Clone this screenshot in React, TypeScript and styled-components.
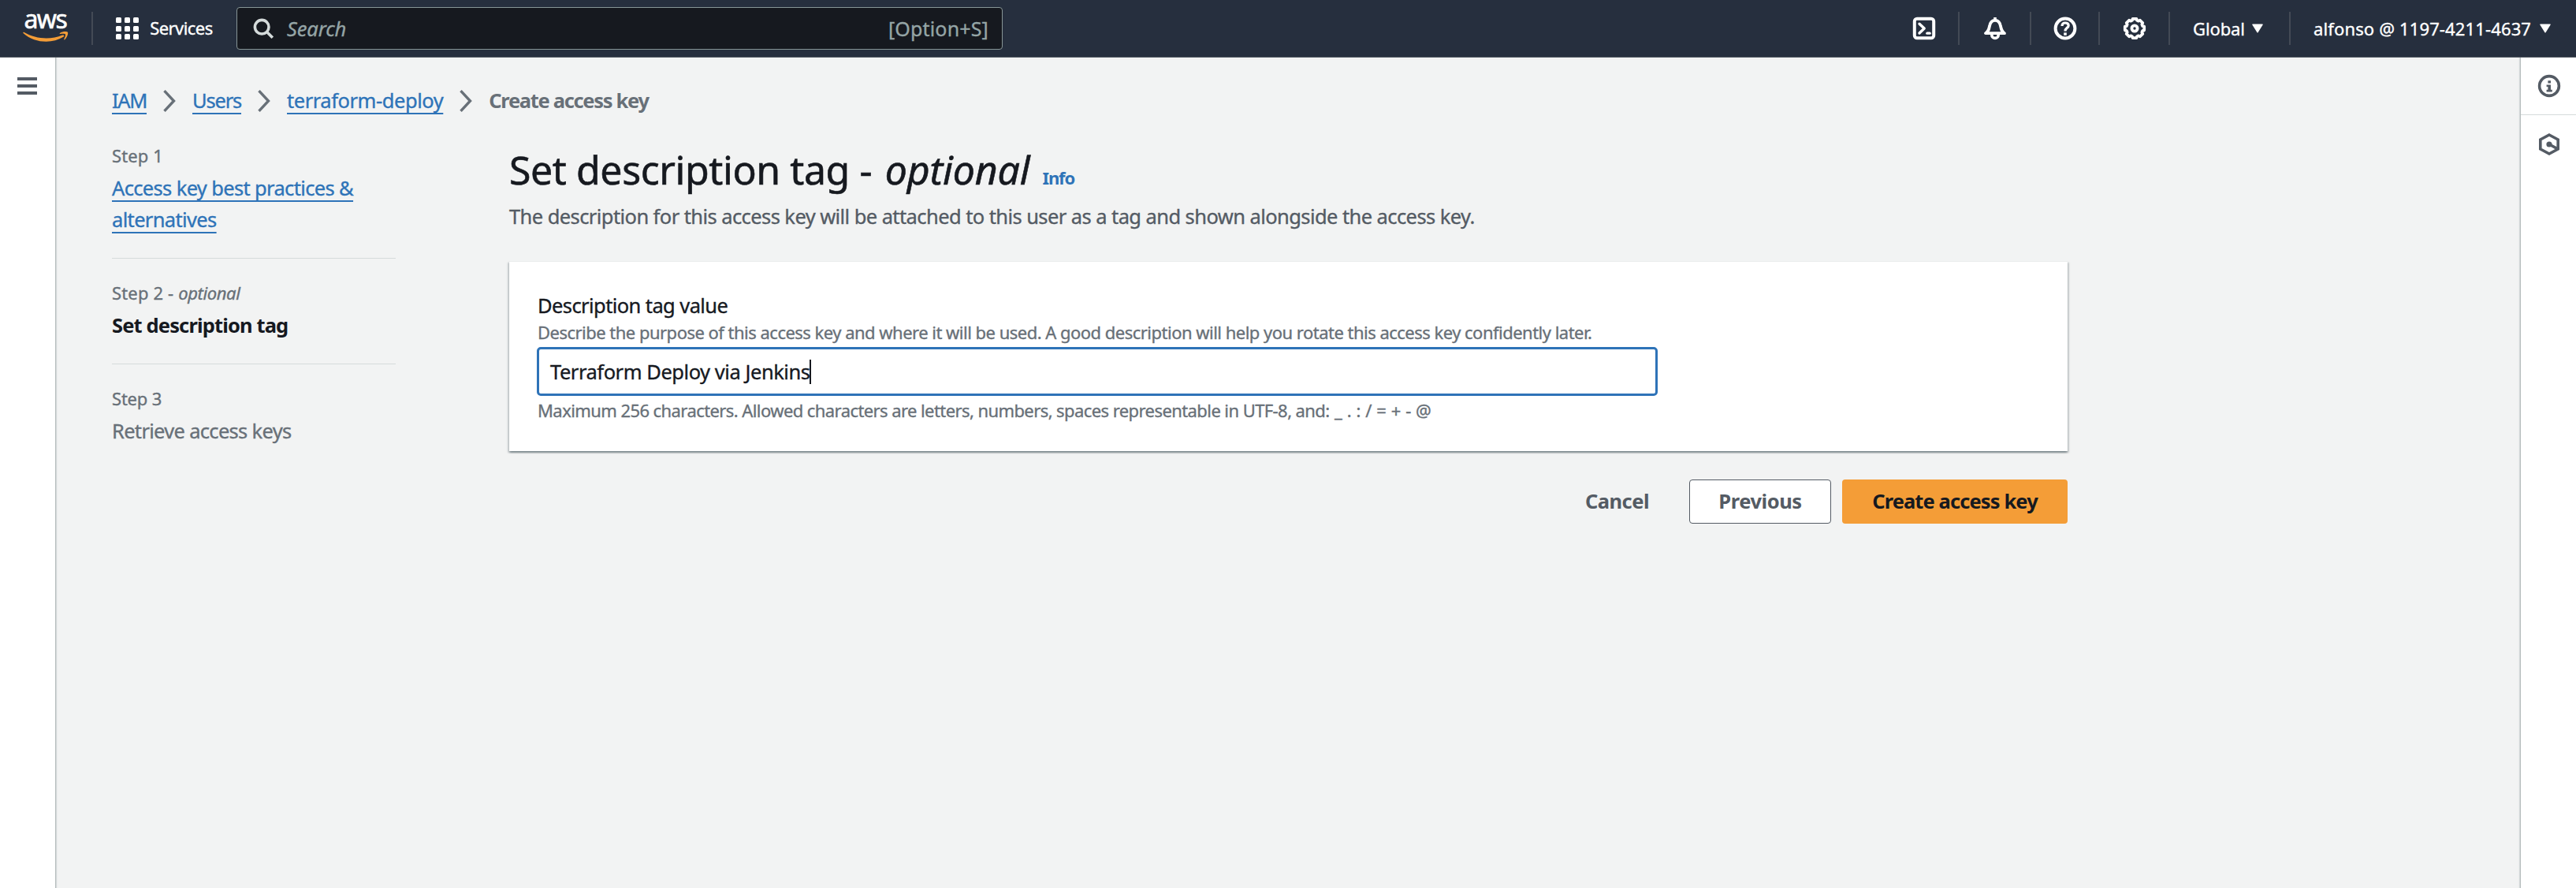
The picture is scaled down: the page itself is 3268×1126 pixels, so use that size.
import React from 'react';
import styled, { createGlobalStyle } from 'styled-components';

const color = {
  nav: '#262f3e',
  navLine: '#434a55',
  ink: '#16191f',
  text: '#545b64',
  muted: '#687078',
  link: '#2e73b8',
  page: '#f2f3f3',
  line: '#d5dbdb',
  orange: '#f49d37',
};

const GlobalStyle = createGlobalStyle`
  * { box-sizing: border-box; }
  body {
    margin: 0;
    background: ${color.page};
    font-family: "Noto Sans", "Open Sans", sans-serif;
    font-size: 25.5px;
    line-height: 40px;
    color: ${color.ink};
    -webkit-text-stroke: 0.35px;
    overflow: hidden;
  }
`;

const Page = styled.div`
  display: flex;
  flex-direction: column;
  height: 1126px;
`;

/* ---------- top navigation ---------- */

const TopNav = styled.header`
  display: flex;
  align-items: center;
  height: 73px;
  flex: none;
  background: ${color.nav};
  border-bottom: 1px solid #545b64;
  color: #fff;
  font-size: 22px;
`;

const Logo = styled.a`
  display: flex;
  flex-direction: column;
  width: 58px;
  height: 48px;
  margin-left: 29px;
`;

const LogoText = styled.span`
  height: 24px;
  padding-left: 1.5px;
  font-size: 32px;
  line-height: 24px;
  letter-spacing: -1.6px;
  -webkit-text-stroke: 0.6px;
`;

const Smile = styled.svg`
  width: 58px;
  height: 16px;
  margin-top: 3px;
`;

const Divider = styled.i<{ $gap?: string }>`
  width: 2px;
  height: 42px;
  margin: ${(p) => p.$gap ?? '0'};
  background: ${color.navLine};
`;

const ServicesButton = styled.div`
  display: flex;
  align-items: center;
  gap: 14px;
  width: 153px;
  letter-spacing: -0.56px;
  line-height: 30px;
`;

const ServicesLabel = styled.span`
  padding-bottom: 2px;
`;

const AppGrid = styled.span`
  display: grid;
  grid-template-columns: repeat(3, 7.4px);
  grid-auto-rows: 7px;
  gap: 3.5px;
`;

const AppDot = styled.i`
  background: #fff;
  border-radius: 1.5px;
`;

const SearchBox = styled.div`
  display: flex;
  align-items: center;
  width: 972px;
  height: 54px;
  padding: 0 17px 0 20px;
  background: ${color.ink};
  border: 1px solid #879596;
  border-radius: 4px;
  color: #95a5a6;
  font-size: 25.5px;
`;

const SearchIcon = styled.svg`
  width: 27px;
  height: 27px;
  fill: none;
  stroke: ${color.line};
  stroke-width: 3.6;
`;

const SearchHint = styled.em`
  flex: 1;
  margin-left: 16px;
  letter-spacing: -0.15px;
`;

const Shortcut = styled.span`
  font-size: 25px;
  letter-spacing: 0.16px;
`;

const NavRight = styled.div`
  display: flex;
  align-items: center;
  margin-left: auto;
`;

const IconCell = styled.span<{ $w: number }>`
  display: flex;
  align-items: center;
  justify-content: center;
  width: ${(p) => p.$w}px;
  height: 72px;
`;

const NavMenu = styled.span<{ $w: number; $track: number; $gap: number }>`
  display: flex;
  align-items: center;
  gap: ${(p) => p.$gap}px;
  width: ${(p) => p.$w}px;
  padding-left: 29px;
  letter-spacing: ${(p) => p.$track}px;
  white-space: nowrap;
`;

const Icon = styled.svg`
  width: 32px;
  height: 32px;
  fill: none;
  stroke: currentColor;
  stroke-width: 2;
  flex: none;
`;

const CaretDown = styled.svg`
  width: 14px;
  height: 12px;
  fill: #fff;
`;

/* ---------- page frame ---------- */

const Body = styled.div`
  display: flex;
  flex: 1;
  min-height: 0;
`;

const LeftRail = styled.aside`
  width: 71px;
  padding: 25px 0 0 22px;
  background: #fff;
  border-right: 1px solid #b6bebe;
  box-shadow: 1px 0 1px rgba(0, 28, 36, 0.12);
`;

const Bars = styled.span`
  display: flex;
  flex-direction: column;
  gap: 5px;
`;

const Bar = styled.i`
  width: 25px;
  height: 4px;
  background: ${color.text};
`;

const RightRail = styled.aside`
  width: 71px;
  background: #fff;
  border-left: 1px solid #b6bebe;
  box-shadow: -1px 0 1px rgba(0, 28, 36, 0.12);
`;

const RailButton = styled.div`
  display: flex;
  align-items: center;
  justify-content: center;
  height: 72px;
  padding-left: 2px;
  color: ${color.text};

  & + & {
    height: 74px;
    border-top: 1px solid ${color.line};
  }
`;

const Main = styled.main`
  flex: 1;
  padding: 34px 0 0 71px;
`;

const Breadcrumbs = styled.nav`
  display: flex;
  align-items: center;
  gap: 21px;
`;

const Link = styled.a<{ $track: number }>`
  color: ${color.link};
  letter-spacing: ${(p) => p.$track}px;
  text-decoration: underline;
  text-decoration-thickness: 2px;
  text-underline-offset: 6px;
  text-decoration-skip-ink: none;
`;

const Chevron = styled.svg`
  width: 16px;
  height: 28px;
  margin-bottom: -1px;
  fill: none;
  stroke: ${color.muted};
  stroke-width: 3.4;
`;

const Current = styled.b`
  color: ${color.muted};
  letter-spacing: -1.32px;
  -webkit-text-stroke: 0;
`;

const Columns = styled.div`
  display: flex;
  gap: 144px;
  margin-top: 34px;
`;

/* ---------- wizard steps ---------- */

const Steps = styled.ol`
  width: 360px;
  margin: 0;
  padding: 0;
  list-style: none;
`;

const Step = styled.li`
  display: flex;
  flex-direction: column;
  gap: 5px;
  padding-bottom: 29px;
  color: ${color.muted};

  & + & {
    padding-top: 27px;
    border-top: 1px solid ${color.line};
  }
`;

const StepNumber = styled.small<{ $track: number }>`
  font-size: 22px;
  line-height: 32px;
  letter-spacing: ${(p) => p.$track}px;

  em {
    letter-spacing: -0.39px;
  }
`;

const StepTitle = styled.span<{ $active?: boolean }>`
  color: ${(p) => (p.$active ? color.ink : color.muted)};
  font-weight: ${(p) => (p.$active ? 700 : 400)};
  letter-spacing: ${(p) => (p.$active ? -0.86 : -0.69)}px;
  -webkit-text-stroke: ${(p) => (p.$active ? 0 : 0.35)}px;
`;

/* ---------- form ---------- */

const Content = styled.section`
  width: 1977px;
  padding-top: 4px;
`;

const Heading = styled.div`
  display: flex;
  align-items: baseline;
  gap: 16px;
`;

const Title = styled.h1`
  margin: 0;
  font-size: 50px;
  font-weight: 400;
  line-height: 60px;
  letter-spacing: -0.42px;
  -webkit-text-stroke: 0.6px;

  em {
    margin-left: 4px;
    letter-spacing: -0.16px;
  }
`;

const Info = styled.b`
  color: ${color.link};
  font-size: 22px;
  letter-spacing: -1.1px;
  -webkit-text-stroke: 0;
`;

const Lead = styled.p`
  margin: 9px 0 0;
  color: ${color.text};
  letter-spacing: -0.578px;
`;

const Card = styled.div`
  margin-top: 37px;
  padding: 37px 36px 36px;
  background: #fff;
  border-top: 1px solid #eaeded;
  box-shadow: 0 2px 2px 0 rgba(0, 28, 36, 0.3), 2px 2px 2px 0 rgba(0, 28, 36, 0.15),
    -2px 2px 2px 0 rgba(0, 28, 36, 0.15);
`;

const Label = styled.label`
  display: block;
  line-height: 36px;
  letter-spacing: -0.588px;
`;

const Help = styled.div<{ $track: number }>`
  color: ${color.muted};
  font-size: 22px;
  line-height: 32px;
  letter-spacing: ${(p) => p.$track}px;
`;

const Symbols = styled.span`
  word-spacing: 1.3px;
`;

const Field = styled.div`
  display: flex;
  align-items: center;
  width: 1422px;
  height: 62px;
  margin: 3px 0 2px -1px;
  padding-left: 14px;
  border: 3px solid ${color.link};
  border-radius: 5px;
  letter-spacing: -0.46px;
`;

const TextCaret = styled.i`
  width: 2px;
  height: 31px;
  margin-left: -1px;
  background: ${color.ink};
`;

const Actions = styled.div`
  display: flex;
  justify-content: flex-end;
  margin-top: 36px;
`;

const Button = styled.button<{ $kind: 'link' | 'normal' | 'primary'; $w: number; $track: number }>`
  width: ${(p) => p.$w}px;
  height: 56px;
  margin-left: ${(p) => (p.$kind === 'primary' ? 14 : 0)}px;
  padding: 0 0 2px;
  font: 700 25.5px/40px "Noto Sans", sans-serif;
  letter-spacing: ${(p) => p.$track}px;
  -webkit-text-stroke: 0;
  color: ${(p) => (p.$kind === 'primary' ? color.ink : color.text)};
  background: ${(p) => ({ link: 'transparent', normal: '#fff', primary: color.orange })[p.$kind]};
  border: ${(p) => (p.$kind === 'normal' ? `1px solid ${color.text}` : '0')};
  border-radius: 4px;
`;

const gearPath = (() => {
  const pts: string[] = [];
  for (let i = 0; i < 8; i++) {
    [[-11, 6.2], [11, 6.2], [17, 5.3], [28, 5.3]].forEach(([d, r]) => {
      const a = ((i * 45 + d) * Math.PI) / 180;
      pts.push(`${(8 + r * Math.sin(a)).toFixed(2)} ${(8 - r * Math.cos(a)).toFixed(2)}`);
    });
  }
  return `M${pts.join('L')}Z`;
})();

const Caret = () => (
  <CaretDown viewBox="0 0 14 12">
    <path d="M0.8 0.5H13.2Q14 0.6 13.6 1.4L7.7 11Q7 12 6.3 11L0.4 1.4Q0 0.6 0.8 0.5Z" />
  </CaretDown>
);

const Separator = () => (
  <Chevron viewBox="0 0 16 28">
    <path d="M1.5 1.2L13.5 14L1.5 26.8" />
  </Chevron>
);

export default function App() {
  return (
    <Page>
      <GlobalStyle />
      <TopNav>
        <Logo>
          <LogoText>aws</LogoText>
          <Smile viewBox="29 39 58 16">
            <path
              fill={color.orange}
              d="M30.2 40.8C46 50.2 65 50.4 79.2 44.6C81.2 44 82 45.6 80.4 46.8C66 55.8 44 54.8 29.7 42.2C28.9 41.3 29.4 40.4 30.2 40.8Z"
            />
            <path
              fill={color.orange}
              d="M76 42C79 39.8 85.3 39.6 86 41C86.7 43 84.8 48 82.2 50.2C81.6 50.6 81 50.4 81.3 49.6C82.3 47 83.6 44.2 82.9 43.4C82 42.4 79.2 42.7 76.6 43C75.7 43.1 75.4 42.5 76 42Z"
            />
          </Smile>
        </Logo>
        <Divider $gap="0 29px 0 29px" />
        <ServicesButton>
          <AppGrid>
            {Array.from({ length: 9 }, (_, i) => (
              <AppDot key={i} />
            ))}
          </AppGrid>
          <ServicesLabel>Services</ServicesLabel>
        </ServicesButton>
        <SearchBox>
          <SearchIcon viewBox="0 0 27 27">
            <circle cx="11.2" cy="11.2" r="8.8" />
            <path d="M17.5 17.5L24.8 24.8" />
          </SearchIcon>
          <SearchHint>Search</SearchHint>
          <Shortcut>[Option+S]</Shortcut>
        </SearchBox>
        <NavRight>
          <IconCell $w={87}>
            <Icon viewBox="0 0 16 16">
              <rect x="1.9" y="1.9" width="12.2" height="12.2" rx="1.6" />
              <path d="M5 5.1L8.1 8L5 11" strokeWidth="1.7" strokeLinecap="round" strokeLinejoin="round" />
              <path d="M9.9 11.1H11.6" strokeWidth="1.6" strokeLinecap="round" />
            </Icon>
          </IconCell>
          <Divider />
          <IconCell $w={89}>
            <Icon viewBox="0 0 16 16">
              <path
                d="M2 11.1H14C12.1 9.8 11.9 8.6 11.5 6.6C11.1 4.2 10 2.9 8 2.9C6 2.9 4.9 4.2 4.5 6.6C4.1 8.6 3.9 9.8 2 11.1Z"
                strokeWidth="1.9"
                strokeLinejoin="round"
              />
              <path d="M8 1V3" strokeWidth="1.8" />
              <path d="M5.9 11.6V12.2A2.1 2 0 0 0 10.1 12.2V11.6" strokeWidth="1.8" />
            </Icon>
          </IconCell>
          <Divider />
          <IconCell $w={85}>
            <Icon viewBox="0 0 16 16">
              <circle cx="8" cy="8" r="6.2" />
              <path
                d="M6 6.5C6 5.1 6.9 4.5 8 4.5C9.2 4.5 10.1 5.1 10.1 6.2C10.1 7.7 8 7.7 8 9.7"
                strokeWidth="1.6"
              />
              <path d="M8 10.7V12.4" strokeWidth="1.8" />
            </Icon>
          </IconCell>
          <Divider />
          <IconCell $w={87}>
            <Icon viewBox="0 0 16 16">
              <path d={gearPath} strokeWidth="1.9" strokeLinejoin="round" />
              <circle cx="8" cy="8" r="1.8" strokeWidth="1.9" />
            </Icon>
          </IconCell>
          <Divider />
          <NavMenu $w={151} $track={-0.12} $gap={9}>
            Global
            <Caret />
          </NavMenu>
          <Divider />
          <NavMenu $w={362} $track={0.14} $gap={11}>
            alfonso @ 1197-4211-4637
            <Caret />
          </NavMenu>
        </NavRight>
      </TopNav>

      <Body>
        <LeftRail>
          <Bars>
            <Bar />
            <Bar />
            <Bar />
          </Bars>
        </LeftRail>

        <Main>
          <Breadcrumbs>
            <Link $track={-1.35}>IAM</Link>
            <Separator />
            <Link $track={-1.2}>Users</Link>
            <Separator />
            <Link $track={-0.45}>terraform-deploy</Link>
            <Separator />
            <Current>Create access key</Current>
          </Breadcrumbs>

          <Columns>
            <Steps>
              <Step>
                <StepNumber $track={0.1}>Step 1</StepNumber>
                <StepTitle>
                  <Link $track={-0.65}>Access key best practices &amp; alternatives</Link>
                </StepTitle>
              </Step>
              <Step>
                <StepNumber $track={0.15}>
                  Step 2 - <em>optional</em>
                </StepNumber>
                <StepTitle $active>Set description tag</StepTitle>
              </Step>
              <Step>
                <StepNumber $track={-0.2}>Step 3</StepNumber>
                <StepTitle>Retrieve access keys</StepTitle>
              </Step>
            </Steps>

            <Content>
              <Heading>
                <Title>
                  Set description tag - <em>optional</em>
                </Title>
                <Info>Info</Info>
              </Heading>
              <Lead>
                The description for this access key will be attached to this user as a tag and shown alongside the access
                key.
              </Lead>
              <Card>
                <Label>Description tag value</Label>
                <Help $track={-0.515}>
                  Describe the purpose of this access key and where it will be used. A good description will help you
                  rotate this access key confidently later.
                </Help>
                <Field>
                  Terraform Deploy via Jenkins
                  <TextCaret />
                </Field>
                <Help $track={-0.58}>
                  Maximum 256 characters. Allowed characters are letters, numbers, spaces representable in UTF-8, and:
                  <Symbols> _ . : / = + - @</Symbols>
                </Help>
              </Card>
              <Actions>
                <Button $kind="link" $w={183} $track={-0.52}>
                  Cancel
                </Button>
                <Button $kind="normal" $w={180} $track={-0.45}>
                  Previous
                </Button>
                <Button $kind="primary" $w={286} $track={-0.89}>
                  Create access key
                </Button>
              </Actions>
            </Content>
          </Columns>
        </Main>

        <RightRail>
          <RailButton>
            <Icon viewBox="0 0 16 16">
              <circle cx="8" cy="8" r="6.2" strokeWidth="1.8" />
              <path
                d="M7.2 4.6H9V6.3H7.2ZM6.3 7.2H9V10.4H9.9V11.8H6.3V10.4H7.2V8.5H6.3Z"
                fill="currentColor"
                stroke="none"
              />
            </Icon>
          </RailButton>
          <RailButton>
            <Icon viewBox="0 0 16 16">
              <path d="M8 2L13.6 5V11L8 14L2.4 11V5Z" strokeWidth="1.8" />
              <circle cx="8" cy="8" r="1.8" fill="currentColor" stroke="none" />
              <path d="M8 8L13.2 10.8" strokeWidth="1.8" />
            </Icon>
          </RailButton>
        </RightRail>
      </Body>
    </Page>
  );
}
